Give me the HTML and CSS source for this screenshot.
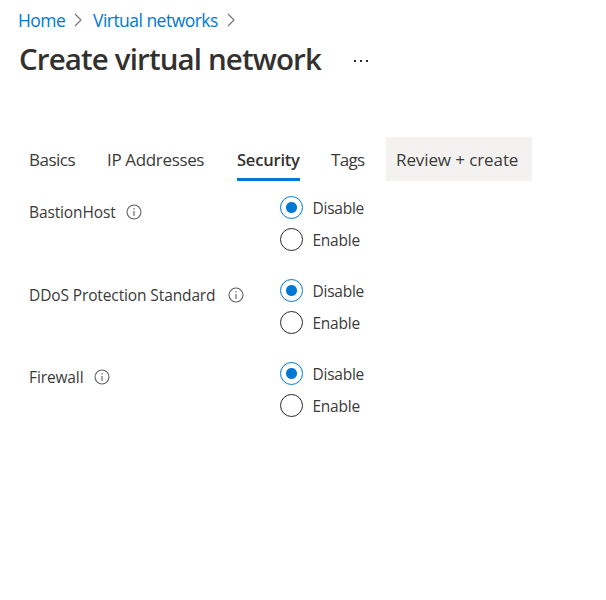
FILE: index.html
```html
<!DOCTYPE html>
<html lang="en">
<head>
<meta charset="utf-8">
<title>Create virtual network</title>
<link rel="stylesheet" href="styles.css">
</head>
<body>
<nav class="crumbs">
  <a class="c-home">Home</a>
  <svg class="chev" width="8" height="14" viewBox="0 0 8 14"><path d="M1 1l6 6-6 6"/></svg>
  <a class="c-vnet">Virtual networks</a>
  <svg class="chev" width="8" height="14" viewBox="0 0 8 14"><path d="M1 1l6 6-6 6"/></svg>
</nav>
<header class="head">
  <h1>Create virtual network</h1>
  <svg class="more" width="14" height="2" viewBox="0 0 14 2"><path d="M0 0h2v2H0zM6 0h2v2H6zM12 0h2v2h-2z"/></svg>
</header>
<div class="tabs">
  <div class="tab t1">Basics</div>
  <div class="tab t2">IP Addresses</div>
  <div class="tab t3 active">Security</div>
  <div class="tab t4">Tags</div>
  <div class="tab t5 review">Review + create</div>
</div>
<main class="form">
  <section class="row">
    <div class="label"><span class="l1">BastionHost</span><svg class="info" width="16" height="16" viewBox="0 0 16 16"><circle cx="8" cy="8" r="7"/><path d="M8 7v5M8 4v1.5"/></svg></div>
    <div class="options">
      <label class="option"><i class="radio on"></i><span>Disable</span></label>
      <label class="option"><i class="radio"></i><span>Enable</span></label>
    </div>
  </section>
  <section class="row">
    <div class="label"><span class="l2">DDoS Protection Standard</span><svg class="info" width="16" height="16" viewBox="0 0 16 16"><circle cx="8" cy="8" r="7"/><path d="M8 7v5M8 4v1.5"/></svg></div>
    <div class="options">
      <label class="option"><i class="radio on"></i><span>Disable</span></label>
      <label class="option"><i class="radio"></i><span>Enable</span></label>
    </div>
  </section>
  <section class="row">
    <div class="label last"><span class="l3">Firewall</span><svg class="info" width="16" height="16" viewBox="0 0 16 16"><circle cx="8" cy="8" r="7"/><path d="M8 7v5M8 4v1.5"/></svg></div>
    <div class="options">
      <label class="option"><i class="radio on"></i><span>Disable</span></label>
      <label class="option"><i class="radio"></i><span>Enable</span></label>
    </div>
  </section>
</main>
</body>
</html>
```
FILE: styles.css
```css
* { box-sizing: border-box; }
body { margin: 0; background: #fff; color: #3b3a39; font-family: "Open Sans", "Noto Sans", sans-serif; font-size: 15.5px; font-weight: 370; white-space: nowrap; }
.crumbs { display: flex; align-items: center; height: 39px; padding-left: 18px; color: #0078d4; font-size: 17.5px; letter-spacing: -0.53px; }
.c-home { width: 47px; }
.c-vnet { width: 125px; margin-left: 1px; }
.chev { margin: 0 10px 0 9px; fill: none; stroke: #797775; stroke-width: 1.2; }
.head { display: flex; align-items: center; height: 40px; padding-left: 19px; }
h1 { margin: 0; width: 335px; font-size: 29.5px; font-weight: 600; line-height: 40px; letter-spacing: -0.87px; color: #323130; }
.more { margin-top: 4px; fill: #292827; }
.tabs { display: flex; margin: 58px 0 0 29px; height: 44px; line-height: 46px; font-size: 17px; letter-spacing: -0.35px; }
.t1 { width: 46px; margin-right: 32px; letter-spacing: -0.5px; }
.t2 { width: 98px; margin-right: 32px; }
.t3 { width: 63px; margin-right: 31px; }
.t4 { width: 34px; margin-right: 21px; letter-spacing: -0.7px; }
.t5 { width: 146px; padding-left: 10px; letter-spacing: -0.1px; }
.active { font-weight: 600; border-bottom: 3px solid #0078d4; font-size: 16.5px; letter-spacing: -0.2px; color: #323130; }
.review { background: #f3f2f1; }
.form { padding: 10px 0 0 29px; }
.row { display: flex; height: 83px; }
.label { display: flex; align-items: center; gap: 11px; width: 251px; height: 42px; letter-spacing: -0.12px; }
.label.last { height: 40px; }
.l1 { width: 86px; }
.l2 { width: 188px; }
.l3 { width: 54px; }
.info { fill: none; stroke: #605e5c; stroke-width: 1.1; }
.option { display: flex; align-items: center; gap: 9.5px; height: 32px; letter-spacing: -0.25px; }
.option span { padding-top: 2px; }
.radio { width: 23px; height: 23px; border: 1px solid #292827; border-radius: 50%; }
.radio.on { border-color: #0078d4; background: radial-gradient(circle, #0078d4 5px, transparent 6px); }
```
